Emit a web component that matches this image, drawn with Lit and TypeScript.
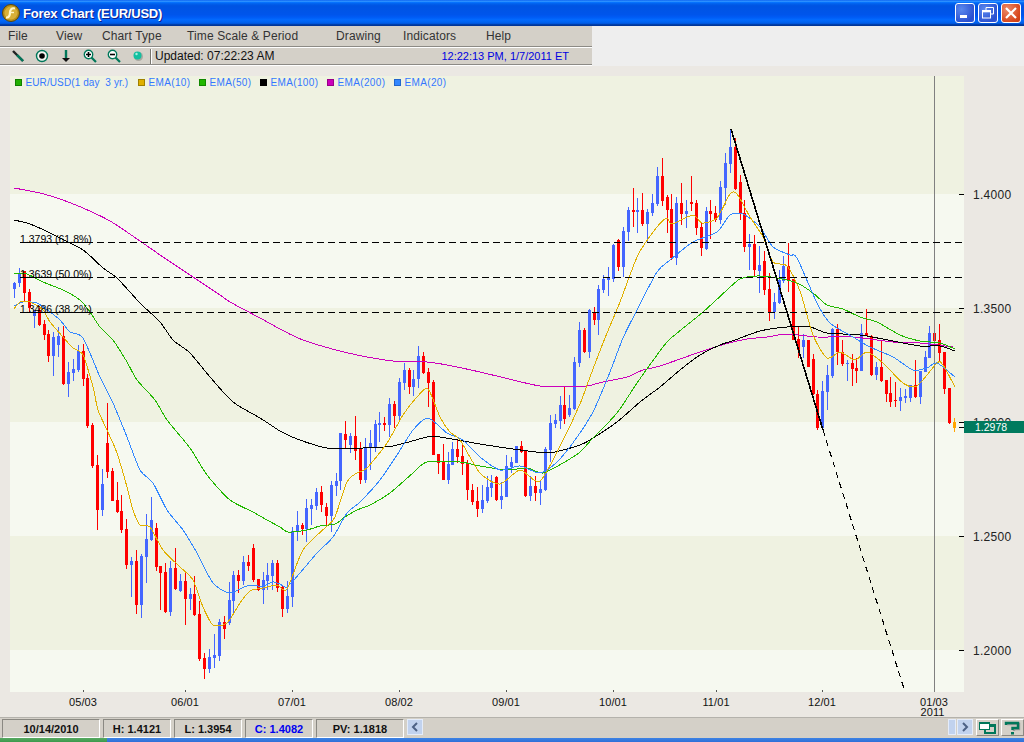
import { LitElement, html, css, svg } from "lit";
import { customElement } from "lit/decorators.js";

type C = [number, number, number, number, number, number];
// x, wick high, body top, body bottom, wick low, kind (0 red, 1 blue, 2 orange)
const CANDLES: C[] = [
[14,282,283,289,298,1],[19,268,274,283,287,1],[24,271,271,293,301,0],[29,289,292,308,313,0],[34,310,310,316,328,1],[39,306,310,325,326,0],[44,320,324,335,340,0],[48,330,334,356,362,0],[53,332,337,356,376,1],[58,327,336,345,357,1],[63,326,336,384,385,0],[68,362,372,384,397,1],[73,359,369,373,381,1],[78,345,351,370,372,1],[83,344,351,379,386,0],[87,374,378,426,428,0],[92,423,425,466,468,0],[97,455,465,510,530,0],[102,469,484,510,516,1],[107,403,443,472,478,0],[112,468,471,501,501,0],[117,482,500,512,513,0],[121,495,511,530,533,0],[126,519,529,565,569,0],[131,557,561,565,597,1],[136,550,561,605,614,0],[141,554,556,605,618,1],[146,514,539,557,583,1],[151,497,520,540,541,1],[156,523,528,567,571,0],[160,566,566,573,610,0],[165,563,572,612,613,0],[170,561,568,612,616,1],[175,548,568,589,590,0],[180,574,581,591,592,1],[185,572,581,599,625,0],[190,588,594,599,610,1],[194,576,594,615,616,0],[199,601,614,659,661,0],[204,653,658,669,679,0],[209,649,657,669,673,1],[214,634,655,658,668,1],[219,619,622,656,661,1],[224,616,622,629,639,0],[229,582,600,623,625,1],[233,571,575,601,613,1],[238,570,575,581,593,0],[243,556,562,581,585,1],[248,555,562,566,571,0],[253,544,548,580,582,0],[258,579,579,590,591,0],[263,572,580,590,604,1],[267,563,575,581,590,1],[272,560,563,576,590,1],[277,560,563,588,592,0],[282,585,587,609,617,0],[287,581,596,609,613,1],[292,527,531,597,607,1],[297,511,525,532,541,1],
[302,523,525,529,535,0],[306,499,508,529,542,1],[311,499,505,509,525,1],[316,488,492,506,510,1],[321,486,492,505,512,0],[326,503,507,516,526,0],[331,481,485,516,532,1],[336,473,481,486,496,1],[340,433,433,481,490,1],[345,421,434,440,448,0],[350,433,436,445,453,1],[355,416,436,451,460,0],[360,442,448,480,484,0],[365,438,447,480,483,1],[370,430,443,448,470,1],[375,420,424,448,452,1],[379,412,423,425,442,1],[384,417,423,425,431,0],[389,398,404,425,437,1],[394,401,404,416,428,0],[399,378,382,416,422,1],[404,363,370,383,390,1],[409,368,370,387,394,0],[413,370,379,387,396,1],[418,346,356,379,388,1],[423,352,356,373,374,0],[428,368,372,383,407,0],[433,380,382,455,455,0],[438,454,454,463,474,0],[443,444,461,480,480,0],[448,452,464,480,484,1],[452,442,449,465,465,1],[457,439,449,457,463,0],[462,445,456,464,475,0],[467,460,463,490,500,0],[472,484,490,502,505,0],[477,487,501,509,517,0],[482,485,500,509,513,1],[487,476,487,501,503,1],[491,475,483,488,497,1],[496,476,477,500,501,0],[501,482,496,500,509,1],[506,455,466,497,497,1],[511,457,462,467,473,1],[516,446,446,463,463,1],[521,441,446,452,453,0],[525,451,451,496,497,0],[530,476,486,496,501,1],[535,476,486,493,501,0],[540,480,489,493,505,1],[545,447,449,490,491,1],[550,415,423,450,462,1],[555,414,420,424,428,1],[560,396,405,421,429,1],[564,387,405,419,424,0],[569,395,408,415,417,1],[574,357,362,409,410,1],[579,322,330,363,367,1],[584,328,330,352,353,0],[589,309,310,352,358,1],[594,307,312,320,325,0],[598,285,289,320,335,1],[603,275,279,290,293,1],[608,267,278,280,296,1],[613,244,245,279,282,1],[618,239,240,267,271,0],[623,227,231,267,277,1],[628,207,210,232,241,1],[633,188,210,212,227,0],[637,198,210,212,233,1],[642,193,210,224,226,0],[647,209,212,224,242,1],[652,194,203,213,216,1],[657,167,176,204,206,1],[662,158,176,201,206,0],[667,195,197,210,233,0],[671,194,209,258,260,0],[676,197,203,258,265,1],[681,183,203,214,225,0],[686,200,211,214,228,1],[691,176,202,204,211,0],[696,200,203,228,235,0],[701,223,227,248,256,0],[706,207,211,249,250,1],[710,200,211,214,239,0],[715,206,213,220,222,0],[720,181,187,220,224,1],[725,153,163,188,205,1],[730,130,147,164,173,1],[735,138,147,189,190,0],[740,175,182,213,220,0],[744,200,213,247,252,0],[749,234,244,247,270,1],[754,235,244,270,277,0],[759,246,265,271,293,1],[764,251,261,290,295,0],[769,273,289,312,321,0],[774,293,302,312,319,1],[779,270,280,303,304,1],[783,256,266,281,283,1],[788,243,266,280,292,0],[793,279,279,340,340,0],[798,327,339,350,358,0],[803,334,340,347,358,1],[808,340,340,367,367,0],[813,354,359,394,395,0],[817,390,394,428,430,0],[822,381,391,428,429,1],[827,365,375,392,410,1],[832,328,329,376,378,1],[837,324,329,352,365,0],[842,340,352,364,366,0],[847,360,363,364,381,1],[852,354,363,369,386,0],[856,358,368,371,383,0],[861,324,333,371,371,1],[866,309,333,336,336,0],[871,335,336,375,376,0],[876,362,367,375,380,1],[881,340,367,381,382,0],[886,380,380,394,402,0],[890,377,393,402,407,0],[895,382,400,401,407,0],[900,388,397,401,411,1],[905,389,396,398,403,1],[910,385,385,398,402,1],[915,360,385,397,398,0],[920,371,371,397,404,1],[925,351,357,372,372,1],[929,326,333,358,358,1],[934,333,333,341,360,0],[939,324,340,353,362,0],[944,352,352,389,394,0],[949,388,388,423,424,0],[954,418,422,428,432,2],
];

const EMA200 = "14,188 40,193 60,199 83,208 110,221 140,241 163,257 193,277 220,295 230,302 260,318 280,329 303,340 348,353 393,361 427,362 447,365 480,372 513,380 540,386 567,387 587,386 603,382 627,377 643,370 660,366 700,352 725,344 747,339 767,337 787,334 817,337 853,337 893,342 920,343 953,347";
const EMA100 = "14,220 30,224 50,233 83,250 103,268 117,278 140,303 160,322 173,340 190,353 210,377 233,402 260,418 280,431 297,439 327,448 363,448 393,446 427,437 440,437 480,444 513,449 547,453 563,450 580,445 590,440 617,422 640,402 660,387 680,370 700,355 720,345 735,340 760,331 787,327 810,327 827,333 860,335 893,341 920,346 940,346 955,351";
const EMA50 = "14,273 27,274 43,282 63,290 80,300 90,312 100,327 113,340 127,362 137,380 155,400 167,420 190,448 207,475 230,500 253,512 267,520 280,527 288,532 307,530 320,526 335,524 345,517 357,510 370,505 390,493 413,473 427,462 460,462 480,466 507,470 527,468 543,473 563,463 580,452 593,438 617,413 637,383 660,351 670,339 703,312 727,290 740,279 757,276 777,278 797,283 813,293 827,305 843,309 860,317 877,322 900,335 920,341 940,343 955,349";
const EMA20 = "14,306 23,302 37,303 50,312 60,320 70,332 83,338 100,377 113,403 127,437 140,470 153,483 167,510 183,530 197,553 213,583 230,593 247,586 263,586 273,582 280,584 287,587 300,573 317,553 333,537 347,513 360,502 380,480 397,455 413,430 428,418 447,433 463,440 480,457 500,470 520,466 540,473 557,462 575,440 593,412 610,372 623,338 637,310 657,272 670,260 693,242 717,232 730,215 743,214 760,227 773,247 790,255 797,258 817,303 830,323 853,337 870,347 893,357 913,370 927,368 937,363 955,377";
const EMA10 = "14,309 20,302 30,302 43,310 50,322 63,337 73,348 83,355 93,387 98,410 107,430 117,453 127,487 133,510 140,525 150,527 163,550 180,567 193,580 203,607 213,625 227,623 240,603 250,591 263,588 277,585 287,589 303,550 327,526 335,517 347,482 357,473 367,468 387,443 403,415 417,397 428,389 440,417 450,432 460,440 480,473 500,484 520,470 540,481 563,440 580,404 590,377 605,338 620,302 638,255 657,227 667,218 672,224 693,215 702,223 717,218 730,194 737,194 750,217 763,237 773,262 787,266 800,291 813,335 827,358 840,352 855,360 867,352 883,363 903,383 917,386 937,363 943,365 955,387";

// Catmull-Rom through every sampled point, so peaks stay where they were read
const smooth = (pts: string) => {
  const p = pts.split(" ").map((s) => s.split(",").map(Number));
  let d = `M${p[0][0]} ${p[0][1]}`;
  for (let i = 0; i < p.length - 1; i++) {
    const a = p[Math.max(0, i - 1)], b = p[i], c = p[i + 1], e = p[Math.min(p.length - 1, i + 2)];
    const k = 8;
    d += ` C${b[0] + (c[0] - a[0]) / k} ${b[1] + (c[1] - a[1]) / k} ${c[0] - (e[0] - b[0]) / k} ${c[1] - (e[1] - b[1]) / k} ${c[0]} ${c[1]}`;
  }
  return d;
};

const BANDS = [[76, 118, 0], [194, 114, 1], [308, 114, 0], [422, 114, 1], [536, 114, 0], [650, 42, 1]];
const LEGEND: [number, string, string, string, string][] = [
  [15, "#22b000", "#118000", "EUR/USD(1 day  3 yr.)", "tight"],
  [138, "#e0b000", "#a08000", "EMA(10)", ""],
  [199, "#22b800", "#118800", "EMA(50)", ""],
  [260, "#000000", "#000000", "EMA(100)", ""],
  [327, "#cc00bb", "#990088", "EMA(200)", ""],
  [394, "#3388ff", "#2266cc", "EMA(20)", ""],
];
const XLABELS: [number, string][] = [[83, "05/03"], [185, "06/01"], [292, "07/01"], [399, "08/02"], [506, "09/01"], [613, "10/01"], [716, "11/01"], [822, "12/01"], [934, "01/03"]];
const PRICES: [number, string][] = [[194, "1.4000"], [308, "1.3500"], [422, "1.3000"], [536, "1.2500"], [650, "1.2000"]];
const FIBS: [number, string][] = [[242, "1.3793 (61.8%)"], [277, "1.3639 (50.0%)"], [312, "1.3486 (38.2%)"]];
const MENU = ["File", "View", "Chart Type", "Time Scale & Period", "Drawing", "Indicators", "Help"];
const CELLS = [["10/14/2010", "w1", ""], ["H: 1.4121", "w2", ""], ["L: 1.3954", "w2", ""], ["C: 1.4082", "w2", "blue"], ["PV: 1.1818", "w3", ""]];
const COLORS = ["#ff0000", "#4466ff", "#ffa500"];

@customElement("app-root")
export class AppRoot extends LitElement {
  static styles = css`
    :host { display: block; width: 1024px; height: 742px; overflow: hidden; font-family: "Liberation Sans", Arial, sans-serif; }
    .root { display: flex; flex-direction: column; height: 742px; width: 1024px; background: #ebe8e3; }
    .title { height: 26px; flex: none; display: flex; align-items: center; padding: 0 3px 0 2px; box-sizing: border-box;
      background: linear-gradient(to bottom, #0058ee 0%, #3593ff 4%, #288eff 6%, #127dff 8%, #036ffc 10%, #0262ee 14%, #0057e5 20%, #0054e3 24%, #0055eb 56%, #005bf5 66%, #026afe 76%, #0062ef 86%, #0052d6 92%, #0040ab 94%, #003092 100%); }
    .title-text { color: #fff; font: bold 13px "Liberation Sans", sans-serif; letter-spacing: -0.22px; margin-left: 3px; text-shadow: 1px 1px 0 #0f1f89; flex: 1; padding-top: 1px; }
    .wbtn { width: 20px; height: 20px; box-sizing: border-box; border: 1px solid #fff; border-radius: 3px; margin-left: 3px; display: flex; background: radial-gradient(circle at 30% 30%, #5a88ee, #2a50d0 75%, #3358d8); margin-bottom: 1px; }
    .wbtn.close { background: radial-gradient(circle at 30% 30%, #ec8a6a, #d8481e 70%, #c83c14); }
    .top { display: flex; height: 40px; flex: none; background: #eeeeee; }
    .bars { width: 592px; background: #d4d0c8; }
    .menu { height: 20px; box-sizing: content-box; border-bottom: 1px solid #8c8a85; box-shadow: 0 1px 0 #fff; margin-bottom: 1px; padding-left: 8px;
      display: grid; grid-template-columns: 48px 46px 85px 149px 67px 83px auto; align-items: center; font-size: 12px; letter-spacing: 0.12px; color: #333; }
    .tools { height: 16px; border-bottom: 1px solid #8c8a85; box-shadow: 0 1px 0 #fff; display: flex; align-items: center; padding-left: 6px; font-size: 12px; }
    .tool { width: 24px; height: 16px; display: flex; align-items: center; justify-content: center; }
    .sep { width: 1px; height: 15px; background: #77756f; border-right: 1px solid #fff; }
    .updated { margin-left: 3px; color: #111; flex: 1; }
    .clock { color: #0000e0; font-size: 11px; margin-right: 23px; }
    .chart { flex: 1; min-height: 0; }
    .chart svg { display: block; }
    .t { font-family: "Liberation Sans", sans-serif; }
    .legend { font-size: 10px; fill: #3377ff; letter-spacing: 0.35px; white-space: pre; }
    .legend.tight { letter-spacing: 0.1px; }
    .fib { font-size: 10.5px; fill: #000; }
    .price { font-size: 12px; fill: #222; letter-spacing: 0.3px; }
    .now { font-size: 10.5px; fill: #fff; }
    .date { font-size: 11px; fill: #111; letter-spacing: 0.1px; }
    .status { flex: none; display: flex; align-items: stretch; gap: 3px; padding: 1px 1px 0 2px; background: #d4d0c8; border-top: 1px solid #b4b2ac; height: 19px; }
    .cell { box-sizing: border-box; border: 1px solid; border-color: #8a8882 #fff #fff #8a8882; display: flex; align-items: center; justify-content: center; font-size: 11px; font-weight: bold; color: #111; }
    .w1 { width: 98px; } .w2 { width: 68px; } .w3 { width: 88px; }
    .blue { color: #0000f0; }
    .sbtn { width: 16px; height: 16px; box-sizing: border-box; border: 1px solid #e4ecfa; background: #c1d2ee; display: flex; align-items: center; justify-content: center; }
    .spacer { flex: 1; }
    .thumb { width: 8px; height: 16px; box-sizing: border-box; border: 1px solid #e4ecfa; background: #c1d2ee; margin-right: -2px; }
    .ibtn { width: 23px; height: 17px; display: flex; align-items: center; justify-content: center; border: 1px solid; box-sizing: border-box; border-color: #fff #8a8882 #8a8882 #fff; margin-right: -1px; }
    .task { height: 4px; flex: none; display: flex; }
    .start { width: 107px; background: linear-gradient(#5aa862, #3a9a4c); }
    .tray { flex: 1; background: linear-gradient(#3d83e4, #2f6fd8); }
  `;

  private chart() {
    return svg`
      <g shape-rendering="crispEdges">
        ${BANDS.map(([y, h, k]) => svg`<rect x="10" y=${y} width="954" height=${h} fill=${k ? "#f6f9f0" : "#eff2e1"}></rect>`)}
        ${PRICES.map(([y]) => svg`<rect x="959" y=${y} width="5" height="1" fill="#000"></rect>`)}
        <rect x="959" y="427" width="5" height="1" fill="#000"></rect>
        ${XLABELS.map(([x]) => svg`<rect x=${x} y="690" width="1" height="2" fill="#555"></rect>`)}
        ${CANDLES.map(([x, h, t, b, l, k]) => svg`
          <rect x=${x} y=${h} width="1" height=${l - h} fill=${COLORS[k]}></rect>
          <rect x=${x - 1} y=${t} width="3" height=${b - t} fill=${COLORS[k]}></rect>`)}
        <line x1="934.5" y1="76" x2="934.5" y2="692" stroke="#808080"></line>
      </g>
      <g fill="none" stroke-width="1" shape-rendering="crispEdges">
        <path d=${smooth(EMA200)} stroke="#cc00bb"></path>
        <path d=${smooth(EMA100)} stroke="#000000"></path>
        <path d=${smooth(EMA50)} stroke="#22b800"></path>
        <path d=${smooth(EMA20)} stroke="#3388ff"></path>
        <path d=${smooth(EMA10)} stroke="#e0b000"></path>
      </g>
      ${FIBS.map(([y, s]) => svg`
        <line x1="20" y1=${y + 0.5} x2="964" y2=${y + 0.5} stroke="#000" stroke-dasharray="7 4" shape-rendering="crispEdges"></line>
        <line x1="20" y1=${y + 0.5} x2="92" y2=${y + 0.5} stroke="#000" shape-rendering="crispEdges"></line>
        <text class="t fib" x="20" y=${y + 1}>${s}</text>`)}
      <line x1="731" y1="129" x2="823" y2="430" stroke="#000" stroke-width="1.6" shape-rendering="crispEdges"></line>
      <line x1="823" y1="430" x2="905" y2="692" stroke="#000" stroke-width="1.1" stroke-dasharray="6 5" shape-rendering="crispEdges"></line>
      ${LEGEND.map(([x, c, b, s, k]) => svg`
        <rect x=${x + 0.5} y="79.5" width="6" height="6" fill=${c} stroke=${b} shape-rendering="crispEdges"></rect>
        <text class="t legend ${k}" x=${x + 10.5} y="86">${s}</text>`)}
      ${PRICES.map(([y, s]) => svg`<text class="t price" x="973" y=${y + 5}>${s}</text>`)}
      <rect x="964" y="421" width="60" height="12" fill="#007a5e"></rect>
      <text class="t now" x="975" y="431">1.2978</text>
      ${XLABELS.map(([x, s]) => svg`<text class="t date" x=${x} y="706" text-anchor="middle">${s}</text>`)}
      <text class="t date" x="932.500" y="716" text-anchor="middle">2011</text>
    `;
  }

  render() {
    return html`<div class="root">
      <div class="title">
        <svg width="18" height="18" viewBox="0 0 18 18">
          <circle cx="9" cy="9" r="8.5" fill="#b8901c" stroke="#5c4608"></circle>
          <circle cx="9" cy="9" r="6.5" fill="#d8b038"></circle>
          <path d="M13 4.500C9.500 3.500 8 6 8 8.500S7 14 4 13.500" fill="none" stroke="#fff6c8" stroke-width="2.2"></path>
          <path d="M7 8.500h5" stroke="#fff6c8" stroke-width="1.4"></path>
        </svg>
        <div class="title-text">Forex Chart (EUR/USD)</div>
        <div class="wbtn"><svg width="18" height="18" viewBox="0 0 18 18"><rect x="4" y="11" width="7" height="3" fill="#fff"></rect></svg></div>
        <div class="wbtn"><svg width="18" height="18" viewBox="0 0 18 18" fill="none" stroke="#fff"><path d="M7 6V3.500h7.500V10H12" stroke-width="1"></path><rect x="3.500" y="6.500" width="8" height="7.500" stroke-width="1"></rect><path d="M3.500 7.500h8" stroke-width="1.6"></path></svg></div>
        <div class="wbtn close"><svg width="18" height="18" viewBox="0 0 18 18"><path d="M4 4l10 10M14 4L4 14" stroke="#fff" stroke-width="2.2"></path></svg></div>
      </div>
      <div class="top">
        <div class="bars">
          <div class="menu">${MENU.map((m) => html`<span>${m}</span>`)}</div>
          <div class="tools">
            <div class="tool"><svg width="14" height="14" viewBox="0 0 14 14"><path d="M2 2l10 10" stroke="#222" stroke-width="2.4"></path><path d="M6 6l6 6" stroke="#00775a" stroke-width="2.4"></path></svg></div>
            <div class="tool"><svg width="14" height="14" viewBox="0 0 14 14"><circle cx="7" cy="7" r="5.500" fill="#f4f4f0" stroke="#00775a" stroke-width="1.4"></circle><circle cx="7" cy="7" r="2.800" fill="#000"></circle></svg></div>
            <div class="tool"><svg width="14" height="14" viewBox="0 0 14 14"><path d="M7 1v9" stroke="#00775a" stroke-width="2.4"></path><path d="M3 9h8l-4 4z" fill="#111"></path></svg></div>
            <div class="tool"><svg width="14" height="14" viewBox="0 0 14 14"><path d="M8 8l5 5" stroke="#00775a" stroke-width="2.2"></path><circle cx="5.500" cy="5.500" r="4.200" fill="#fff" stroke="#00775a" stroke-width="1.4"></circle><path d="M3 5.500h5M5.500 3v5" stroke="#000" stroke-width="1.6"></path></svg></div>
            <div class="tool"><svg width="14" height="14" viewBox="0 0 14 14"><path d="M8 8l5 5" stroke="#00775a" stroke-width="2.2"></path><circle cx="5.500" cy="5.500" r="4.200" fill="#fff" stroke="#00775a" stroke-width="1.4"></circle><path d="M3 5.500h5" stroke="#000" stroke-width="1.6"></path></svg></div>
            <div class="tool"><svg width="12" height="12" viewBox="0 0 12 12"><circle cx="6.500" cy="6.500" r="4.500" fill="#aaa8a0"></circle><circle cx="5.500" cy="5.500" r="4" fill="#12c0a0"></circle><circle cx="4.500" cy="4" r="1.200" fill="#a8f0e0"></circle></svg></div>
            <div class="sep"></div>
            <div class="updated">Updated: 07:22:23 AM</div>
            <div class="clock">12:22:13 PM, 1/7/2011 ET</div>
          </div>
        </div>
      </div>
      <div class="chart">
        <svg width="1024" height="651" viewBox="0 66 1024 651">${this.chart()}</svg>
      </div>
      <div class="status">
        ${CELLS.map(([s, w, c]) => html`<div class="cell ${w} ${c}">${s}</div>`)}
        <div class="sbtn"><svg width="10" height="12" viewBox="0 0 10 12"><path d="M7 2L3 6l4 4" fill="none" stroke="#4d6185" stroke-width="2"></path></svg></div>
        <div class="spacer"></div>
        <div class="thumb"></div>
        <div class="sbtn"><svg width="10" height="12" viewBox="0 0 10 12"><path d="M3 2l4 4-4 4" fill="none" stroke="#4d6185" stroke-width="2"></path></svg></div>
        <div class="ibtn"><svg width="19" height="14" viewBox="0 0 19 14"><rect x="6" y="3" width="12" height="10" fill="#00775a"></rect><rect x="8" y="6" width="8" height="5" fill="#d4d0c8"></rect><rect x="1" y="1" width="11" height="8" fill="#00775a"></rect><rect x="2" y="3" width="9" height="5" fill="#fff"></rect></svg></div>
        <div class="ibtn"><svg width="19" height="14" viewBox="0 0 19 14"><path d="M3 2h12v5H10v2" fill="none" stroke="#999" stroke-width="2.4" transform="translate(1 1)"></path><path d="M3 4V2h12v5H9.500v2" fill="none" stroke="#00775a" stroke-width="2.4"></path><rect x="8" y="11" width="3" height="2.500" fill="#00775a"></rect></svg></div>
      </div>
      <div class="task"><div class="start"></div><div class="tray"></div></div>
    </div>`;
  }
}
